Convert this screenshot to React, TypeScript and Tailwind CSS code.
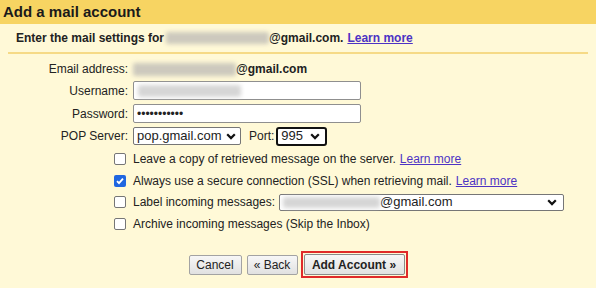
import React from 'react';

function Blur({ w, h, color = 'bg-[#cdc9bd]' }: { w: string; h: string; color?: string }) {
  return <span className={`inline-block ${w} ${h} ${color} blur-[2px] rounded-[2px]`} />;
}

function Chevron() {
  return (
    <svg width="10" height="7" viewBox="0 0 10 7" className="shrink-0">
      <path d="M1.2 1.3l3.8 3.8 3.8-3.8" fill="none" stroke="#111" strokeWidth="2.2" />
    </svg>
  );
}

function CheckBox({ checked }: { checked?: boolean }) {
  if (checked) {
    return (
      <span className="w-[12px] h-[12px] rounded-[2px] bg-[#1f66e0] flex items-center justify-center shrink-0">
        <svg width="10" height="10" viewBox="0 0 10 10">
          <path d="M2 5.2l2 2 4-4.6" fill="none" stroke="#fff" strokeWidth="1.8" />
        </svg>
      </span>
    );
  }
  return <span className="w-[12px] h-[12px] rounded-[2px] border border-[#767676] bg-white shrink-0" />;
}

function LearnMore() {
  return <a className="text-[#4d33c4] underline ml-[4px] cursor-pointer">Learn more</a>;
}

export default function App() {
  return (
    <div className="w-[596px] h-[288px] bg-[#fff9d7] font-['Liberation_Sans',Arial,sans-serif] text-[#222] text-[12px] overflow-hidden">
      <div className="h-[24px] bg-[#f7d462] pl-[3px] flex items-center text-[15px] font-bold text-[#1a1a1a]">
        Add a mail account
      </div>

      <div className="mx-[8px] h-[30px] border-b-2 border-[#f6da86] pl-[8px] flex items-center font-bold">
        <span>Enter the mail settings for</span>
        <span className="ml-[2px] flex items-center">
          <Blur w="w-[103px]" h="h-[12px]" />
        </span>
        <span>@gmail.com.</span>
        <LearnMore />
      </div>

      <div className="pt-[5px]">
        <div className="flex items-center h-[20px]">
          <span className="w-[128px] text-right">Email address:</span>
          <span className="ml-[5px] flex items-center">
            <Blur w="w-[103px]" h="h-[13px]" />
          </span>
          <span className="font-bold">@gmail.com</span>
        </div>

        <div className="flex items-center h-[19px] mt-[2px]">
          <span className="w-[128px] text-right">Username:</span>
          <div className="ml-[5px] w-[228px] h-[19px] border border-[#8f8f8f] rounded-[2px] bg-white flex items-center pl-[4px]">
            <Blur w="w-[103px]" h="h-[12px]" color="bg-[#d6d6d6]" />
          </div>
        </div>

        <div className="flex items-center h-[19px] mt-[4px]">
          <span className="w-[128px] text-right">Password:</span>
          <div className="ml-[5px] w-[228px] h-[19px] border border-[#8f8f8f] rounded-[2px] bg-white flex items-center pl-[3px] text-[12px]">
            •••••••••••
          </div>
        </div>

        <div className="flex items-center h-[18px] mt-[4px]">
          <span className="w-[128px] text-right">POP Server:</span>
          <div className="ml-[5px] w-[108px] h-[18px] border border-[#767676] rounded-[2px] bg-white flex items-center justify-between pl-[3px] pr-[4px] text-[13px]">
            <span>pop.gmail.com</span>
            <Chevron />
          </div>
          <span className="ml-[8px]">Port:</span>
          <div className="ml-[2px] w-[51px] h-[19px] border-2 border-[#111] rounded-[3px] bg-white flex items-center justify-between pl-[3px] pr-[5px] text-[13px]">
            <span>995</span>
            <Chevron />
          </div>
        </div>

        <div className="mt-[3px] pl-[114px] flex flex-col">
          <div className="flex items-center h-[22px]">
            <CheckBox />
            <span className="ml-[7px]">Leave a copy of retrieved message on the server.</span>
            <LearnMore />
          </div>
          <div className="flex items-center h-[21px]">
            <CheckBox checked />
            <span className="ml-[7px]">Always use a secure connection (SSL) when retrieving mail.</span>
            <LearnMore />
          </div>
          <div className="flex items-center h-[22px]">
            <CheckBox />
            <span className="ml-[7px]">Label incoming messages:</span>
            <div className="ml-[4px] w-[285px] h-[17px] border border-[#767676] rounded-[2px] bg-white flex items-center justify-between pl-[3px] pr-[6px] text-[13px]">
              <span className="flex items-center">
                <Blur w="w-[97px]" h="h-[11px]" color="bg-[#d6d6d6]" />
                <span>@gmail.com</span>
              </span>
              <Chevron />
            </div>
          </div>
          <div className="flex items-center h-[22px]">
            <CheckBox />
            <span className="ml-[7px]">Archive incoming messages (Skip the Inbox)</span>
          </div>
        </div>

        <div className="mt-[16px] flex justify-center items-center">
          <button className="h-[20px] w-[53px] border border-[#a3a3a3] rounded-[2px] bg-linear-to-b from-[#f7f7f7] to-[#e1e1e1] text-[12px] text-[#222]">
            Cancel
          </button>
          <button className="ml-[5px] h-[20px] w-[51px] border border-[#a3a3a3] rounded-[2px] bg-linear-to-b from-[#f7f7f7] to-[#e1e1e1] text-[12px] text-[#222]">
            « Back
          </button>
          <div className="ml-[3px] border-2 border-[#e02a2a] p-[1px]">
            <button className="h-[21px] w-[101px] border border-[#8a8a8a] rounded-[2px] bg-linear-to-b from-[#f7f7f7] to-[#e1e1e1] text-[12px] font-bold text-[#222]">
              Add Account »
            </button>
          </div>
        </div>
      </div>
    </div>
  );
}
